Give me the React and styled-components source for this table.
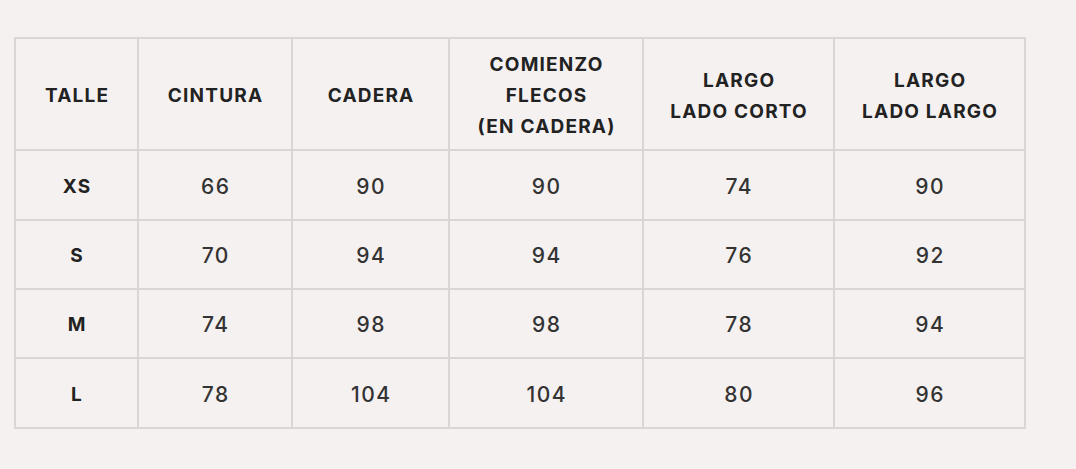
import React from "react";
import styled, { createGlobalStyle } from "styled-components";

const GlobalStyle = createGlobalStyle`
  html, body {
    margin: 0;
    padding: 0;
    background: #f5f1f0;
  }
  body {
    font-family: Inter, "Liberation Sans", sans-serif;
    color: #262626;
  }
`;

const LINE = "#dbd6d5";

const Page = styled.div`
  width: 1076px;
  height: 469px;
  padding: 37px 0 0 14px;
  box-sizing: border-box;
  background: #f5f1f0;
`;

const Grid = styled.div`
  display: grid;
  grid-template-columns: 123px 154px 157px 194px 191px 191px;
  grid-template-rows: 112px 70px 69px 69px 70px;
  width: 1012px;
  border-top: 2px solid ${LINE};
  border-left: 2px solid ${LINE};
  box-sizing: border-box;
`;

const Cell = styled.div`
  display: flex;
  align-items: center;
  justify-content: center;
  text-align: center;
  border-right: 2px solid ${LINE};
  border-bottom: 2px solid ${LINE};
  font-size: ${(p) => (p.$head || p.$size ? "19px" : "21px")};
  font-weight: ${(p) => (p.$head || p.$size ? 700 : 500)};
  line-height: ${(p) => (p.$head ? "31px" : "1")};
  letter-spacing: ${(p) => (p.$head || p.$size ? "1.2px" : "1.5px")};
  padding-left: ${(p) => (p.$head || p.$size ? "1.2px" : "1.5px")};
  padding-top: ${(p) => (p.$head ? "3px" : "2px")};
  color: ${(p) => (p.$head || p.$size ? "#222" : "#333")};
`;

const headers = [
  ["TALLE"],
  ["CINTURA"],
  ["CADERA"],
  ["COMIENZO", "FLECOS", "(EN CADERA)"],
  ["LARGO", "LADO CORTO"],
  ["LARGO", "LADO LARGO"],
];

const rows = [
  ["XS", 66, 90, 90, 74, 90],
  ["S", 70, 94, 94, 76, 92],
  ["M", 74, 98, 98, 78, 94],
  ["L", 78, 104, 104, 80, 96],
];

export default function App() {
  return (
    <>
      <GlobalStyle />
      <Page>
        <Grid>
          {headers.map((lines, i) => (
            <Cell key={i} $head>
              <div>
                {lines.map((l) => (
                  <div key={l}>{l}</div>
                ))}
              </div>
            </Cell>
          ))}
          {rows.map((row) =>
            row.map((v, i) => (
              <Cell key={row[0] + i} $size={i === 0}>
                {v}
              </Cell>
            ))
          )}
        </Grid>
      </Page>
    </>
  );
}
